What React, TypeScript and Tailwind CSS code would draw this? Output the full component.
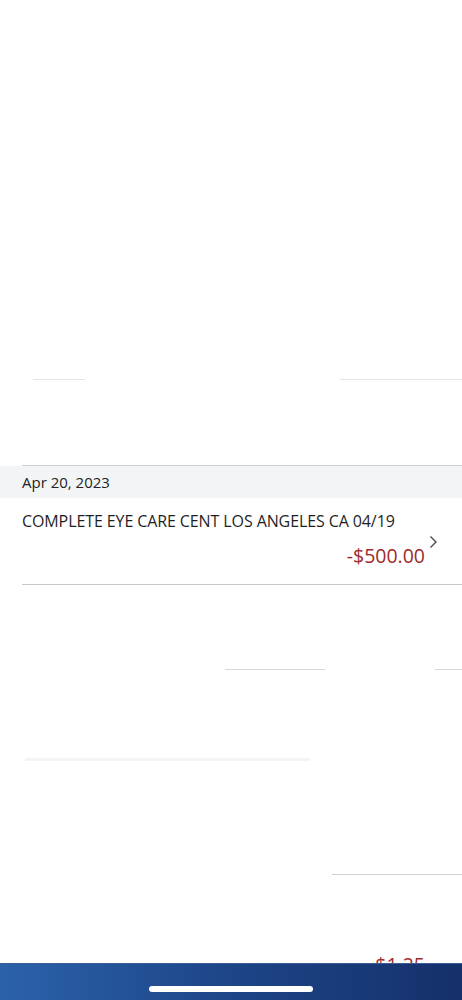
import React from "react";

export default function App() {
  const font = { fontFamily: '"Open Sans", "Noto Sans", Arial, sans-serif' };
  return (
    <div className="relative w-[462px] h-[1000px] overflow-hidden bg-white" style={font}>
      {/* earlier (faded) rows */}
      <div className="h-[379px]" />
      <div className="flex h-px">
        <div className="ml-[33px] w-[52px] bg-[#e4e4e4]" />
        <div className="ml-[255px] flex-1 bg-[#e6e6e6]" />
      </div>
      <div className="h-[85px]" />

      {/* date header */}
      <div className="ml-[22px] h-px bg-[#cfcfd2]" />
      <div className="h-[32px] bg-[#f3f4f6] pl-[22px] flex items-center">
        <span className="text-[15px] leading-5 text-[#232323]">Apr 20, 2023</span>
      </div>

      {/* transaction */}
      <div className="pl-[22px] pr-[24px] pt-[13px] h-[86px]">
        <div className="text-[16px] leading-5 text-[#1f1f1f] tracking-[-0.1px]">
          COMPLETE EYE CARE CENT LOS ANGELES CA 04/19
        </div>
        <div className="flex justify-end items-start mt-[4px]">
          <div className="text-[19.5px] leading-6 text-[#9e2a2b] mt-[9px]">-$500.00</div>
          <svg width="9" height="14" viewBox="0 0 9 14" className="ml-[4px]">
            <path d="M1.5 1.5 L7 7 L1.5 12.5" fill="none" stroke="#4a4a4a" strokeWidth="1.4" />
          </svg>
        </div>
      </div>
      <div className="ml-[22px] h-px bg-[#c9c9cc]" />

      {/* further faded rows */}
      <div className="h-[84px]" />
      <div className="flex h-px">
        <div className="ml-[225px] w-[100px] bg-[#d8d8d8]" />
        <div className="ml-[110px] flex-1 bg-[#d8d8d8]" />
      </div>
      <div className="h-[88px]" />
      <div className="flex h-[3px]">
        <div className="ml-[25px] w-[285px] bg-[#f4f4f6]" />
      </div>
      <div className="h-[113px]" />
      <div className="flex h-px">
        <div className="ml-[332px] flex-1 bg-[#cfcfd2]" />
      </div>
      <div className="h-[78px]" />
      <div className="flex justify-end pr-[37px]">
        <div className="text-[19.5px] leading-6 text-[#9e2a2b]">$1.25</div>
      </div>

      {/* bottom bar overlay */}
      <div className="absolute left-0 right-0 bottom-0 h-[37px] bg-gradient-to-r from-[#2c62ab] via-[#1d4587] to-[#15306b] border-t border-[#3b5f95]">
        <div className="absolute left-[149px] top-[22px] w-[164px] h-[6px] rounded-full bg-white" />
      </div>
    </div>
  );
}
